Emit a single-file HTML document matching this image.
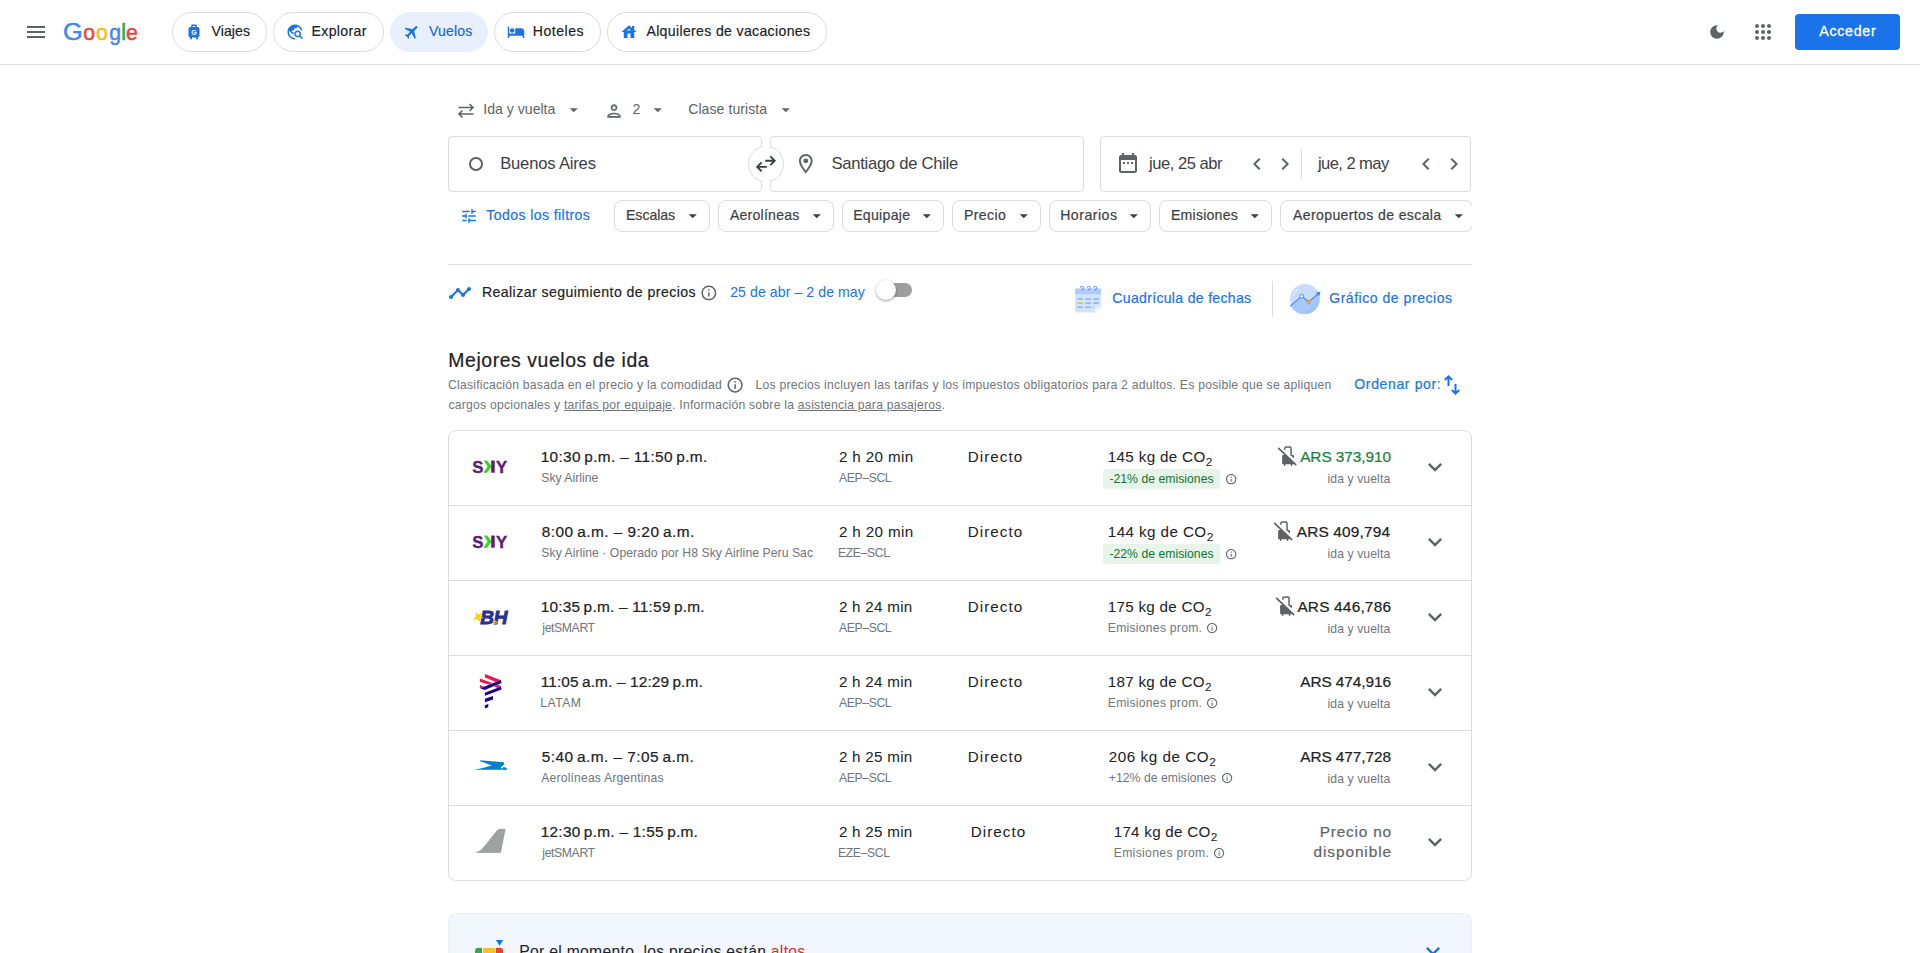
<!DOCTYPE html>
<html lang="es">
<head>
<meta charset="utf-8">
<title>Vuelos de Buenos Aires a Santiago de Chile</title>
<style>
*{box-sizing:border-box;margin:0;padding:0}
html,body{width:1920px;height:953px;overflow:hidden;background:#fff}
body{font-family:"Liberation Sans",sans-serif;color:#202124;position:relative}
.abs{position:absolute;white-space:nowrap}
svg{display:block}
u{text-decoration:underline;text-underline-offset:1px}
header{position:absolute;left:0;top:0;width:1920px;height:65px;border-bottom:1px solid #dadce0;background:#fff}
.pill{position:absolute;top:12px;height:40px;border:1px solid #dadce0;border-radius:20px}
.pill.on{background:#e8f0fe;border-color:#e8f0fe}
.btn{position:absolute;left:1795px;top:14px;width:105px;height:36px;border-radius:4px;background:#1a73e8}
.field{position:absolute;top:136px;height:56px;border:1px solid #dadce0;border-radius:4px;background:#fff}
.hr{position:absolute;left:448px;top:264px;width:1024px;height:1px;background:#dadce0}
.list{position:absolute;left:448px;top:430px;width:1024px;height:451px;border:1px solid #dadce0;border-radius:8px;background:#fff}
.row{position:absolute;left:0;width:1022px;height:75px;border-top:1px solid #dadce0}
.row:first-child{border-top-color:transparent}
</style>
</head>
<body>
<header>
<svg class="abs" style="left:24px;top:20px" width="24" height="24" viewBox="0 0 24 24"><path fill="#5f6368" d="M3 18h18v-2H3v2zm0-5h18v-2H3v2zm0-7v2h18V6H3z"/></svg>
<div class="logo"><span class="abs" style="left:63.00px;top:19px;font-size:23.6px;line-height:26px;color:#4285f4;-webkit-text-stroke:0.45px #4285f4;transform:scaleX(1.07);transform-origin:0 0;">G</span><span class="abs" style="left:83.20px;top:21px;font-size:21.2px;line-height:23px;color:#ea4335;-webkit-text-stroke:0.45px #ea4335;">o</span><span class="abs" style="left:96.00px;top:21px;font-size:21.2px;line-height:23px;color:#fbbc05;-webkit-text-stroke:0.45px #fbbc05;">o</span><span class="abs" style="left:109.20px;top:21px;font-size:21.2px;line-height:23px;color:#4285f4;-webkit-text-stroke:0.45px #4285f4;">g</span><span class="abs" style="left:120.90px;top:19px;font-size:23.6px;line-height:26px;color:#34a853;-webkit-text-stroke:0.45px #34a853;">l</span><span class="abs" style="left:126.10px;top:21px;font-size:21.2px;line-height:23px;color:#ea4335;-webkit-text-stroke:0.45px #ea4335;">e</span></div>
<nav>
<div class="pill" style="left:172px;width:95px"></div>
<span class="abs" style="left:211.50px;top:23px;font-size:14.1px;line-height:16px;color:#202124;letter-spacing:0.083px;-webkit-text-stroke:0.18px #202124;">Viajes</span>
<div class="pill" style="left:273px;width:111px"></div>
<span class="abs" style="left:311.50px;top:23px;font-size:14.1px;line-height:16px;color:#202124;letter-spacing:0.345px;-webkit-text-stroke:0.18px #202124;">Explorar</span>
<div class="pill on" style="left:390px;width:98px"></div>
<span class="abs" style="left:429.10px;top:23px;font-size:14.1px;line-height:16px;color:#1967d2;letter-spacing:0.115px;-webkit-text-stroke:0.18px #1967d2;">Vuelos</span>
<div class="pill" style="left:494px;width:107px"></div>
<span class="abs" style="left:532.80px;top:23px;font-size:14.1px;line-height:16px;color:#202124;letter-spacing:0.510px;-webkit-text-stroke:0.18px #202124;">Hoteles</span>
<div class="pill" style="left:607px;width:220px"></div>
<span class="abs" style="left:646.40px;top:23px;font-size:14.1px;line-height:16px;color:#202124;letter-spacing:0.337px;-webkit-text-stroke:0.18px #202124;">Alquileres de vacaciones</span>
<svg class="abs" style="left:188px;top:24px" width="12" height="16" viewBox="0 0 12 16"><path fill="#1a73e8" d="M3.900 0.600h4.200c.4 0 .7.300.7.700V3h.7c1.100 0 2 .9 2 2v6.500c0 1-.7 1.800-1.700 2v1.300c0 .4-.3.700-.7.700h-.4c-.4 0-.7-.3-.7-.700V13.500H4v1.300c0 .4-.3.700-.7.700h-.4c-.4 0-.7-.3-.7-.700V13.500c-1-.2-1.700-1-1.700-2V5c0-1.100.9-2 2-2h.7V1.300c0-.4.300-.7.700-.7zm.8 1.400V3h2.600V2z"/><text x="6" y="10.900" font-size="7" font-weight="bold" fill="#fff" text-anchor="middle" font-family="Liberation Sans">G</text></svg>
<svg class="abs" style="left:286px;top:22.500px" width="18" height="18" viewBox="0 0 24 24"><path fill="#1a73e8" d="M19.300 16.900c.4-.7.7-1.500.7-2.400 0-2.500-2-4.500-4.500-4.500S11 12 11 14.500s2 4.500 4.500 4.500c.9 0 1.700-.3 2.400-.7l3.200 3.200 1.400-1.400-3.200-3.200zm-3.800.1c-1.400 0-2.500-1.100-2.500-2.500s1.100-2.500 2.500-2.500 2.500 1.100 2.500 2.500-1.100 2.500-2.500 2.500zM12 20v2C6.480 22 2 17.520 2 12S6.480 2 12 2c4.840 0 8.870 3.440 9.800 8h-2.070c-.64-2.460-2.400-4.470-4.730-5.410V5c0 1.100-.9 2-2 2h-2v2c0 .55-.45 1-1 1H8v2h2v3H9l-4.790-4.790C4.080 10.790 4 11.380 4 12c0 4.410 3.590 8 8 8z"/></svg>
<svg class="abs" style="left:402.500px;top:22.500px;transform:rotate(45deg)" width="18" height="18" viewBox="0 0 24 24"><path fill="#1a73e8" d="M21 16v-2l-8-5V3.500c0-.83-.67-1.500-1.500-1.500S10 2.670 10 3.500V9l-8 5v2l8-2.500V19l-2 1.500V22l3.500-1 3.500 1v-1.500L13 19v-5.500l8 2.500z"/></svg>
<svg class="abs" style="left:506.700px;top:22.500px" width="18" height="18" viewBox="0 0 24 24"><path fill="#1a73e8" d="M7 13c1.660 0 3-1.340 3-3S8.660 7 7 7s-3 1.340-3 3 1.340 3 3 3zm12-6h-8v7H3V5H1v15h2v-3h18v3h2v-9c0-2.210-1.790-4-4-4z"/></svg>
<svg class="abs" style="left:619.500px;top:22.500px" width="18" height="18" viewBox="0 0 24 24"><path fill="#1a73e8" d="M19 9.300V4h-3v2.600L12 3 2 12h3v8h5v-6h4v6h5v-8h3l-3-2.700zm-9 .7c0-1.100.9-2 2-2s2 .9 2 2h-4z"/></svg>
</nav>
<svg class="abs" style="left:1708px;top:23px" width="18" height="18" viewBox="0 0 24 24"><path fill="#5f6368" d="M12 3c-4.970 0-9 4.030-9 9s4.030 9 9 9 9-4.030 9-9c0-.46-.04-.92-.1-1.360-.98 1.370-2.580 2.260-4.400 2.260-2.980 0-5.400-2.420-5.400-5.400 0-1.810.89-3.420 2.260-4.400-.44-.06-.9-.1-1.360-.1z"/></svg>
<svg class="abs" style="left:1751px;top:20px" width="24" height="24" viewBox="0 0 24 24" fill="#5f6368"><circle cx="6" cy="6" r="2"/><circle cx="12" cy="6" r="2"/><circle cx="18" cy="6" r="2"/><circle cx="6" cy="12" r="2"/><circle cx="12" cy="12" r="2"/><circle cx="18" cy="12" r="2"/><circle cx="6" cy="18" r="2"/><circle cx="12" cy="18" r="2"/><circle cx="18" cy="18" r="2"/></svg>
<div class="btn"></div>
<span class="abs" style="left:1819.30px;top:23px;font-size:14.2px;line-height:16px;color:#fff;letter-spacing:0.713px;-webkit-text-stroke:0.3px #fff;">Acceder</span>
</header>
<main>
<section class="opts">
<svg class="abs" style="left:454px;top:99px" width="24" height="24" viewBox="0 0 24 24" fill="none" stroke="#5f6368" stroke-width="1.6"><path d="M4.500 8.500h14.500M15.500 5l3.500 3.500-3.500 3.500M19.500 15H5M8.500 11.500L5 15l3.500 3.500"/></svg>
<span class="abs" style="left:483.30px;top:101px;font-size:14.1px;line-height:16px;color:#5f6368;">Ida y vuelta</span>
<svg class="abs" style="left:564.25px;top:99.55px" width="19.500" height="19.500" viewBox="0 0 24 24"><path fill="#5f6368" d="M7 10l5 5 5-5z"/></svg>
<svg class="abs" style="left:604.100px;top:100.600px" width="20" height="20" viewBox="0 0 24 24"><path fill="#5f6368" d="M12 6c1.100 0 2 .9 2 2s-.9 2-2 2-2-.9-2-2 .9-2 2-2m0 10c2.700 0 5.800 1.290 6 2H6c.23-.72 3.310-2 6-2m0-12C9.790 4 8 5.790 8 8s1.790 4 4 4 4-1.790 4-4-1.790-4-4-4zm0 10c-2.670 0-8 1.340-8 4v2h16v-2c0-2.660-5.330-4-8-4z"/></svg>
<span class="abs" style="left:632.50px;top:101px;font-size:14.1px;line-height:16px;color:#5f6368;">2</span>
<svg class="abs" style="left:648.25px;top:99.55px" width="19.500" height="19.500" viewBox="0 0 24 24"><path fill="#5f6368" d="M7 10l5 5 5-5z"/></svg>
<span class="abs" style="left:688.20px;top:101px;font-size:14.1px;line-height:16px;color:#5f6368;letter-spacing:0.051px;">Clase turista</span>
<svg class="abs" style="left:775.85px;top:99.55px" width="19.500" height="19.500" viewBox="0 0 24 24"><path fill="#5f6368" d="M7 10l5 5 5-5z"/></svg>
</section>
<section class="search">
<div class="field" style="left:448px;width:314px"></div>
<div class="field" style="left:770px;width:314px"></div>
<div class="field" style="left:1100px;width:371px"></div>
<div class="abs" style="left:469.200px;top:157.200px;width:13.700px;height:13.700px;border:2.400px solid #5f6368;border-radius:50%"></div>
<span class="abs" style="left:500.20px;top:154px;font-size:16.6px;line-height:19px;color:#3c4043;letter-spacing:-0.182px;">Buenos Aires</span>
<div class="abs" style="left:748.250px;top:146px;width:35.500px;height:35.500px;border:1px solid #dadce0;border-radius:50%;background:#fff"></div>
<div class="abs" style="left:762px;top:143px;width:8px;height:42px;background:#fff"></div>
<svg class="abs" style="left:754px;top:152px" width="24" height="24" viewBox="0 0 24 24" fill="none" stroke="#3c4043" stroke-width="1.900"><path d="M11.200 8.700H20.200M16.300 4.300l4.400 4.400-4.400 4.500M12.900 14.900H3.700M7.600 10.400l-4.400 4.500 4.400 4.500"/></svg>
<svg class="abs" style="left:794.300px;top:152.100px" width="23.600" height="23.600" viewBox="0 0 24 24"><path fill="#5f6368" d="M12 2C8.130 2 5 5.130 5 9c0 5.250 7 13 7 13s7-7.750 7-13c0-3.870-3.130-7-7-7zM7 9c0-2.760 2.240-5 5-5s5 2.240 5 5c0 2.880-2.880 7.190-5 9.880C9.920 16.210 7 11.850 7 9z"/><circle fill="#5f6368" cx="12" cy="9" r="2.500"/></svg>
<span class="abs" style="left:831.40px;top:154px;font-size:16.6px;line-height:19px;color:#3c4043;letter-spacing:-0.261px;">Santiago de Chile</span>
<svg class="abs" style="left:1116px;top:151px" width="24" height="24" viewBox="0 0 24 24"><path fill="#5f6368" d="M9 11H7v2h2v-2zm4 0h-2v2h2v-2zm4 0h-2v2h2v-2zm2-7h-1V2h-2v2H8V2H6v2H5c-1.110 0-1.990.9-1.990 2L3 20c0 1.100.89 2 2 2h14c1.100 0 2-.9 2-2V6c0-1.100-.9-2-2-2zm0 16H5V9h14v11z"/></svg>
<span class="abs" style="left:1149.10px;top:154px;font-size:16.6px;line-height:19px;color:#3c4043;letter-spacing:-0.489px;">jue, 25 abr</span>
<svg class="abs" style="left:1245.10px;top:152px" width="24" height="24" viewBox="0 0 24 24"><path fill="#5f6368" d="M15.410 7.410L14 6l-6 6 6 6 1.410-1.410L10.830 12z"/></svg>
<svg class="abs" style="left:1273.10px;top:152px" width="24" height="24" viewBox="0 0 24 24"><path fill="#5f6368" d="M10 6L8.590 7.410 13.170 12l-4.580 4.590L10 18l6-6z"/></svg>
<div class="abs" style="left:1301px;top:149px;width:1px;height:30px;background:#dadce0"></div>
<span class="abs" style="left:1318.00px;top:154px;font-size:16.6px;line-height:19px;color:#3c4043;letter-spacing:-0.595px;">jue, 2 may</span>
<svg class="abs" style="left:1414.30px;top:152px" width="24" height="24" viewBox="0 0 24 24"><path fill="#5f6368" d="M15.410 7.410L14 6l-6 6 6 6 1.410-1.410L10.830 12z"/></svg>
<svg class="abs" style="left:1442.30px;top:152px" width="24" height="24" viewBox="0 0 24 24"><path fill="#5f6368" d="M10 6L8.590 7.410 13.170 12l-4.580 4.590L10 18l6-6z"/></svg>
</section>
<section class="filters">
<svg class="abs" style="left:459.500px;top:207px" width="18" height="18" viewBox="0 0 24 24"><path fill="#1a73e8" d="M3 17v2h6v-2H3zM3 5v2h10V5H3zm10 16v-2h8v-2h-8v-2h-2v6h2zM7 9v2H3v2h4v2h2V9H7zm14 4v-2H11v2h10zm-6-4h2V7h4V5h-4V3h-2v6z"/></svg>
<span class="abs" style="left:486.30px;top:207px;font-size:14.1px;line-height:16px;color:#1a73e8;letter-spacing:0.401px;-webkit-text-stroke:0.2px #1a73e8;">Todos los filtros</span>
<div class="abs" style="left:448px;top:196px;width:1024px;height:40px;overflow:hidden">
<div class="abs" style="left:166px;top:4px;width:96px;height:32px;border:1px solid #dadce0;border-radius:8px"></div>
<div class="abs" style="left:270px;top:4px;width:116px;height:32px;border:1px solid #dadce0;border-radius:8px"></div>
<div class="abs" style="left:394px;top:4px;width:102px;height:32px;border:1px solid #dadce0;border-radius:8px"></div>
<div class="abs" style="left:504px;top:4px;width:89px;height:32px;border:1px solid #dadce0;border-radius:8px"></div>
<div class="abs" style="left:601px;top:4px;width:102px;height:32px;border:1px solid #dadce0;border-radius:8px"></div>
<div class="abs" style="left:711px;top:4px;width:113px;height:32px;border:1px solid #dadce0;border-radius:8px"></div>
<div class="abs" style="left:832px;top:4px;width:193px;height:32px;border:1px solid #dadce0;border-radius:8px"></div>
</div>
<span class="abs" style="left:626.00px;top:207px;font-size:14.1px;line-height:16px;color:#3c4043;letter-spacing:-0.034px;-webkit-text-stroke:0.18px #3c4043;">Escalas</span>
<svg class="abs" style="left:683.05px;top:206.35px" width="19.500" height="19.500" viewBox="0 0 24 24"><path fill="#3c4043" d="M7 10l5 5 5-5z"/></svg>
<span class="abs" style="left:729.90px;top:207px;font-size:14.1px;line-height:16px;color:#3c4043;letter-spacing:0.230px;-webkit-text-stroke:0.18px #3c4043;">Aerolíneas</span>
<svg class="abs" style="left:807.35px;top:206.35px" width="19.500" height="19.500" viewBox="0 0 24 24"><path fill="#3c4043" d="M7 10l5 5 5-5z"/></svg>
<span class="abs" style="left:853.20px;top:207px;font-size:14.1px;line-height:16px;color:#3c4043;letter-spacing:0.283px;-webkit-text-stroke:0.18px #3c4043;">Equipaje</span>
<svg class="abs" style="left:917.35px;top:206.35px" width="19.500" height="19.500" viewBox="0 0 24 24"><path fill="#3c4043" d="M7 10l5 5 5-5z"/></svg>
<span class="abs" style="left:964.00px;top:207px;font-size:14.1px;line-height:16px;color:#3c4043;letter-spacing:0.378px;-webkit-text-stroke:0.18px #3c4043;">Precio</span>
<svg class="abs" style="left:1014.15px;top:206.35px" width="19.500" height="19.500" viewBox="0 0 24 24"><path fill="#3c4043" d="M7 10l5 5 5-5z"/></svg>
<span class="abs" style="left:1060.20px;top:207px;font-size:14.1px;line-height:16px;color:#3c4043;letter-spacing:0.498px;-webkit-text-stroke:0.18px #3c4043;">Horarios</span>
<svg class="abs" style="left:1124.25px;top:206.35px" width="19.500" height="19.500" viewBox="0 0 24 24"><path fill="#3c4043" d="M7 10l5 5 5-5z"/></svg>
<span class="abs" style="left:1171.00px;top:207px;font-size:14.1px;line-height:16px;color:#3c4043;letter-spacing:0.217px;-webkit-text-stroke:0.18px #3c4043;">Emisiones</span>
<svg class="abs" style="left:1245.25px;top:206.35px" width="19.500" height="19.500" viewBox="0 0 24 24"><path fill="#3c4043" d="M7 10l5 5 5-5z"/></svg>
<span class="abs" style="left:1293.00px;top:207px;font-size:14.1px;line-height:16px;color:#3c4043;letter-spacing:0.356px;-webkit-text-stroke:0.18px #3c4043;">Aeropuertos de escala</span>
<svg class="abs" style="left:1449.45px;top:206.35px" width="19.500" height="19.500" viewBox="0 0 24 24"><path fill="#3c4043" d="M7 10l5 5 5-5z"/></svg>
</section>
<div class="hr"></div>
<section class="track">
<svg class="abs" style="left:447.900px;top:280.500px" width="24" height="24" viewBox="0 0 24 24"><path fill="#1a73e8" d="M23 8c0 1.100-.9 2-2 2-.18 0-.35-.02-.51-.07l-3.560 3.550c.05.16.07.34.07.52 0 1.100-.9 2-2 2s-2-.9-2-2c0-.18.02-.36.07-.52l-2.550-2.550c-.16.05-.34.07-.52.07s-.36-.02-.52-.07l-4.550 4.560c.05.16.07.33.07.51 0 1.100-.9 2-2 2s-2-.9-2-2 .9-2 2-2c.18 0 .35.02.51.07l4.560-4.550C8.020 9.360 8 9.180 8 9c0-1.100.9-2 2-2s2 .9 2 2c0 .18-.02.36-.07.52l2.550 2.550c.16-.05.34-.07.52-.07s.36.02.52.07l3.550-3.560C19.020 8.350 19 8.180 19 8c0-1.100.9-2 2-2s2 .9 2 2z"/></svg>
<span class="abs" style="left:481.90px;top:284px;font-size:14.1px;line-height:16px;color:#202124;letter-spacing:0.437px;-webkit-text-stroke:0.18px #202124;">Realizar seguimiento de precios</span>
<svg class="abs" style="left:700.02px;top:284.32px" width="17.76" height="17.76" viewBox="0 0 24 24"><path fill="#5f6368" d="M11 17h2v-6h-2v6zm1-15C6.480 2 2 6.480 2 12s4.480 10 10 10 10-4.480 10-10S17.520 2 12 2zm0 18c-4.410 0-8-3.590-8-8s3.590-8 8-8 8 3.590 8 8-3.590 8-8 8zM11 9h2V7h-2v2z"/></svg>
<span class="abs" style="left:730.20px;top:284px;font-size:14.1px;line-height:16px;color:#1a73e8;letter-spacing:0.076px;">25 de abr – 2 de may</span>
<div class="abs" style="left:878px;top:283px;width:34px;height:14px;border-radius:7px;background:#9e9e9e"></div>
<div class="abs" style="left:876px;top:280px;width:20px;height:20px;border-radius:50%;background:#fff;box-shadow:0 1px 3px rgba(0,0,0,.4)"></div>
<svg class="abs" style="left:1075px;top:285.500px" width="26" height="27" viewBox="0 0 26 27"><path fill="#d2e3fc" d="M1.500 2.500h23A1.500 1.500 0 0 1 26 4v16.500l-6 6H1.500A1.500 1.500 0 0 1 0 25V4a1.500 1.500 0 0 1 1.500-1.500z"/><path fill="#aecbfa" d="M1.500 2.500h23A1.500 1.500 0 0 1 26 4v4.200H0V4a1.500 1.500 0 0 1 1.500-1.500z"/><path fill="#e8f0fe" d="M20 26.500v-4.500a1.500 1.500 0 0 1 1.500-1.500H26z"/><g fill="none" stroke="#4285f4" stroke-width=".9"><path d="M5.400 1.800a1.600 1.600 0 1 1 1.700 1.600v1.100M12 1.800a1.600 1.600 0 1 1 1.700 1.600v1.100M18.600 1.800a1.600 1.600 0 1 1 1.700 1.600v1.100"/></g><g stroke="#8ab4f8" stroke-width="1.500"><path d="M2.200 13h5.700M10.400 13H16M18.400 13H24M10.400 17.200H16M18.400 17.200H24M2.200 21.200h5.700M10.400 21.200H16M18.400 21.200h.8"/></g><path stroke="#fbbc04" stroke-width="1.500" d="M2.200 17.200h5.700"/></svg>
<span class="abs" style="left:1112.30px;top:290px;font-size:14.1px;line-height:16px;color:#1a73e8;letter-spacing:0.298px;-webkit-text-stroke:0.18px #1a73e8;">Cuadrícula de fechas</span>
<div class="abs" style="left:1272px;top:281px;width:1px;height:36px;background:#dadce0"></div>
<svg class="abs" style="left:1289.900px;top:284.200px" width="31" height="30" viewBox="0 0 31 30"><circle cx="15" cy="15" r="15" fill="#c9dcfc"/><path fill="#a8c7fa" d="M.8 21.500L11.700 12.200l7 5.700 9.600-8.400A15 15 0 0 1 .8 21.500z"/><path d="M16 27.500a12.500 12.500 0 0 0 11-9.500" fill="none" stroke="#8ab4f8" stroke-width=".9"/><path d="M3.200 12a12.500 12.500 0 0 1 5-7" fill="none" stroke="#e8f0fe" stroke-width=".9"/><path d="M0 22.200L11.700 12.200l7 5.700L29 9" fill="none" stroke="#4285f4" stroke-width="1.100"/><path fill="#4285f4" d="M30.500 7.600l-1.300 4.600-3.300-3.500z"/><circle cx="11.700" cy="12.200" r="1.900" fill="#e8f0fe" stroke="#4285f4" stroke-width=".9"/><circle cx="18.700" cy="17.900" r="1.700" fill="#fbbc04" stroke="#e8710a" stroke-width=".7"/></svg>
<span class="abs" style="left:1329.20px;top:290px;font-size:14.1px;line-height:16px;color:#1a73e8;letter-spacing:0.499px;-webkit-text-stroke:0.18px #1a73e8;">Gráfico de precios</span>
</section>
<section class="head">
<span class="abs" style="left:448.30px;top:349px;font-size:19.4px;line-height:22px;color:#202124;letter-spacing:0.583px;-webkit-text-stroke:0.2px #202124;font-weight:normal;">Mejores vuelos de ida</span>
<span class="abs" style="left:448.00px;top:378px;font-size:12.2px;line-height:14px;color:#70757a;letter-spacing:0.218px;">Clasificación basada en el precio y la comodidad</span>
<svg class="abs" style="left:725.68px;top:376.08px" width="18.24" height="18.24" viewBox="0 0 24 24"><path fill="#5f6368" d="M11 17h2v-6h-2v6zm1-15C6.480 2 2 6.480 2 12s4.480 10 10 10 10-4.480 10-10S17.520 2 12 2zm0 18c-4.410 0-8-3.590-8-8s3.590-8 8-8 8 3.590 8 8-3.590 8-8 8zM11 9h2V7h-2v2z"/></svg>
<span class="abs" style="left:755.60px;top:378px;font-size:12.2px;line-height:14px;color:#70757a;letter-spacing:0.228px;">Los precios incluyen las tarifas y los impuestos obligatorios para 2 adultos. Es posible que se apliquen</span>
<span class="abs" style="left:448.40px;top:398px;font-size:12.2px;line-height:14px;color:#70757a;letter-spacing:0.223px;">cargos opcionales y <u>tarifas por equipaje</u>. Información sobre la <u>asistencia para pasajeros</u>.</span>
<span class="abs" style="left:1354.30px;top:376px;font-size:14.1px;line-height:16px;color:#1a73e8;letter-spacing:0.592px;-webkit-text-stroke:0.18px #1a73e8;">Ordenar por:</span>
<svg class="abs" style="left:1440px;top:373px" width="24" height="24" viewBox="0 0 24 24" fill="none" stroke="#1a73e8" stroke-width="2"><path d="M8.500 13V3.500M4.800 7L8.500 3.300 12.200 7M15.500 11v9.500M11.800 17l3.700 3.700 3.700-3.700"/></svg>
</section>
<section class="flights">
<div class="list">
<div class="row" style="top:-1px"></div>
<div class="row" style="top:74px"></div>
<div class="row" style="top:149px"></div>
<div class="row" style="top:224px"></div>
<div class="row" style="top:299px"></div>
<div class="row" style="top:374px"></div>
</div>
<article>
<svg class="abs" style="left:472px;top:458px" width="37" height="18" viewBox="0 0 37 18" font-family="Liberation Sans" font-weight="bold" font-size="16.800"><text x="0.300" y="14.700" fill="#5e1a78" stroke="#5e1a78" stroke-width=".35">S</text><polygon fill="#2edc0a" points="11.800,2.500 15.200,2.500 19.600,8.500 14.900,14.700 11.300,14.700 15.600,8.500"/><rect x="19.200" y="2.500" width="3.500" height="12.200" fill="#5e1a78"/><text x="24" y="14.700" fill="#5e1a78" stroke="#5e1a78" stroke-width=".35">Y</text></svg>
<span class="abs" style="left:540.70px;top:448px;font-size:15.4px;line-height:17px;color:#202124;letter-spacing:0.343px;-webkit-text-stroke:0.2px #202124;">10:30 p.m. – 11:50 p.m.</span>
<span class="abs" style="left:541.30px;top:471px;font-size:12.2px;line-height:14px;color:#70757a;letter-spacing:0.011px;">Sky Airline</span>
<span class="abs" style="left:838.90px;top:448px;font-size:15.2px;line-height:17px;color:#202124;letter-spacing:0.370px;">2 h 20 min</span>
<span class="abs" style="left:839.00px;top:471px;font-size:12.2px;line-height:14px;color:#70757a;letter-spacing:-0.383px;">AEP–SCL</span>
<span class="abs" style="left:967.80px;top:448px;font-size:15.2px;line-height:17px;color:#202124;letter-spacing:1.057px;">Directo</span>
<span class="abs" style="left:1107.80px;top:448px;font-size:15.2px;line-height:17px;color:#202124;letter-spacing:0.336px;">145 kg de CO<sub style="font-size:11.800px;line-height:0;vertical-align:baseline;position:relative;top:4px;margin-left:.2px;letter-spacing:0">2</sub></span>
<div class="abs" style="left:1103px;top:469px;width:117px;height:20px;border-radius:3px;background:#e6f4ea"></div>
<span class="abs" style="left:1109.40px;top:472px;font-size:12.2px;line-height:14px;color:#137333;letter-spacing:0.034px;">-21% de emisiones</span>
<svg class="abs" style="left:1224.92px;top:472.92px" width="12.36" height="12.36" viewBox="0 0 24 24"><path fill="#5f6368" d="M11 17h2v-6h-2v6zm1-15C6.480 2 2 6.480 2 12s4.480 10 10 10 10-4.480 10-10S17.520 2 12 2zm0 18c-4.410 0-8-3.590-8-8s3.590-8 8-8 8 3.590 8 8-3.590 8-8 8zM11 9h2V7h-2v2z"/></svg>
<svg class="abs" style="left:1276.94px;top:445.00px" width="21" height="22" viewBox="0 0 21 22"><path fill="none" stroke="#5f6368" stroke-width="1.500" d="M7.850 4.700V3.200a1.250 1.250 0 0 1 1.250-1.250h3.700a1.250 1.250 0 0 1 1.250 1.250V10.500"/><path fill="#5f6368" d="M5.900 9.900h2.620L17 18.060v.34a.8.8 0 0 1-.8.800H5.900a.8.8 0 0 1-.8-.800v-7.700a.8.800 0 0 1 .8-.800z"/><path fill="#5f6368" d="M13.280 9.900H16.200a.8.800 0 0 1 .8.800v2.780z"/><path fill="#5f6368" d="M6.700 19h1.900l-.35 1.500a.6.600 0 0 1-1.200 0zM13.600 19h1.900l-.35 1.500a.6.600 0 0 1-1.200 0z"/><path fill="none" stroke="#5f6368" stroke-width="1.700" stroke-linecap="round" d="M1.700 3.300l17 16.400"/></svg>
<span class="abs" style="left:1300.20px;top:448px;font-size:15.4px;line-height:17px;color:#188038;letter-spacing:-0.080px;-webkit-text-stroke:0.2px #188038;">ARS 373,910</span>
<span class="abs" style="left:1327.50px;top:472px;font-size:12.2px;line-height:14px;color:#70757a;letter-spacing:0.093px;">ida y vuelta</span>
<svg class="abs" style="left:1421.00px;top:452.88px" width="28" height="28" viewBox="0 0 24 24"><path fill="#5f6368" d="M16.590 8.590L12 13.170 7.410 8.590 6 10l6 6 6-6z"/></svg>
</article>
<article>
<svg class="abs" style="left:472px;top:533px" width="37" height="18" viewBox="0 0 37 18" font-family="Liberation Sans" font-weight="bold" font-size="16.800"><text x="0.300" y="14.700" fill="#5e1a78" stroke="#5e1a78" stroke-width=".35">S</text><polygon fill="#2edc0a" points="11.800,2.500 15.200,2.500 19.600,8.500 14.900,14.700 11.300,14.700 15.600,8.500"/><rect x="19.200" y="2.500" width="3.500" height="12.200" fill="#5e1a78"/><text x="24" y="14.700" fill="#5e1a78" stroke="#5e1a78" stroke-width=".35">Y</text></svg>
<span class="abs" style="left:541.70px;top:523px;font-size:15.4px;line-height:17px;color:#202124;letter-spacing:0.481px;-webkit-text-stroke:0.2px #202124;">8:00 a.m. – 9:20 a.m.</span>
<span class="abs" style="left:541.30px;top:546px;font-size:12.2px;line-height:14px;color:#70757a;letter-spacing:0.059px;">Sky Airline · Operado por H8 Sky Airline Peru Sac</span>
<span class="abs" style="left:838.90px;top:523px;font-size:15.2px;line-height:17px;color:#202124;letter-spacing:0.370px;">2 h 20 min</span>
<span class="abs" style="left:838.00px;top:546px;font-size:12.2px;line-height:14px;color:#70757a;letter-spacing:-0.352px;">EZE–SCL</span>
<span class="abs" style="left:967.80px;top:523px;font-size:15.2px;line-height:17px;color:#202124;letter-spacing:1.057px;">Directo</span>
<span class="abs" style="left:1107.80px;top:523px;font-size:15.2px;line-height:17px;color:#202124;letter-spacing:0.418px;">144 kg de CO<sub style="font-size:11.800px;line-height:0;vertical-align:baseline;position:relative;top:4px;margin-left:.2px;letter-spacing:0">2</sub></span>
<div class="abs" style="left:1103px;top:544px;width:117px;height:20px;border-radius:3px;background:#e6f4ea"></div>
<span class="abs" style="left:1109.40px;top:547px;font-size:12.2px;line-height:14px;color:#137333;letter-spacing:0.034px;">-22% de emisiones</span>
<svg class="abs" style="left:1224.92px;top:547.92px" width="12.36" height="12.36" viewBox="0 0 24 24"><path fill="#5f6368" d="M11 17h2v-6h-2v6zm1-15C6.480 2 2 6.480 2 12s4.480 10 10 10 10-4.480 10-10S17.520 2 12 2zm0 18c-4.410 0-8-3.590-8-8s3.590-8 8-8 8 3.590 8 8-3.590 8-8 8zM11 9h2V7h-2v2z"/></svg>
<svg class="abs" style="left:1273.34px;top:520.00px" width="21" height="22" viewBox="0 0 21 22"><path fill="none" stroke="#5f6368" stroke-width="1.500" d="M7.850 4.700V3.200a1.250 1.250 0 0 1 1.250-1.250h3.700a1.250 1.250 0 0 1 1.250 1.250V10.500"/><path fill="#5f6368" d="M5.900 9.900h2.620L17 18.060v.34a.8.8 0 0 1-.8.800H5.900a.8.8 0 0 1-.8-.800v-7.700a.8.800 0 0 1 .8-.800z"/><path fill="#5f6368" d="M13.280 9.900H16.200a.8.800 0 0 1 .8.800v2.780z"/><path fill="#5f6368" d="M6.700 19h1.900l-.35 1.500a.6.600 0 0 1-1.200 0zM13.600 19h1.900l-.35 1.500a.6.600 0 0 1-1.200 0z"/><path fill="none" stroke="#5f6368" stroke-width="1.700" stroke-linecap="round" d="M1.700 3.300l17 16.400"/></svg>
<span class="abs" style="left:1296.80px;top:523px;font-size:15.4px;line-height:17px;color:#202124;letter-spacing:0.160px;-webkit-text-stroke:0.2px #202124;">ARS 409,794</span>
<span class="abs" style="left:1327.50px;top:547px;font-size:12.2px;line-height:14px;color:#70757a;letter-spacing:0.093px;">ida y vuelta</span>
<svg class="abs" style="left:1421.00px;top:527.88px" width="28" height="28" viewBox="0 0 24 24"><path fill="#5f6368" d="M16.590 8.590L12 13.170 7.410 8.590 6 10l6 6 6-6z"/></svg>
</article>
<article>
<svg class="abs" style="left:471px;top:606px" width="40" height="22" viewBox="0 0 40 22" font-family="Liberation Sans"><text x="9.300" y="17.900" font-size="19" font-weight="bold" font-style="italic" fill="#2b2f8e" stroke="#2b2f8e" stroke-width=".9" letter-spacing="-.3">BH</text><polygon fill="#f2d410" points="4.400,6.100 7.380,8.800 10.500,6.300 9.470,10.190 12.800,11.800 9.170,12.710 8.800,15.800 6.320,13.390 2.100,13.500 5.020,10.460"/><circle cx="24.200" cy="16.300" r="1.700" fill="#f2d410"/><circle cx="23.300" cy="13.800" r=".8" fill="#f2d410"/><circle cx="24.600" cy="16.600" r=".6" fill="#2b2f8e"/></svg>
<span class="abs" style="left:540.70px;top:598px;font-size:15.4px;line-height:17px;color:#202124;letter-spacing:0.221px;-webkit-text-stroke:0.2px #202124;">10:35 p.m. – 11:59 p.m.</span>
<span class="abs" style="left:542.30px;top:621px;font-size:12.2px;line-height:14px;color:#70757a;letter-spacing:-0.366px;">jetSMART</span>
<span class="abs" style="left:838.90px;top:598px;font-size:15.2px;line-height:17px;color:#202124;letter-spacing:0.270px;">2 h 24 min</span>
<span class="abs" style="left:839.00px;top:621px;font-size:12.2px;line-height:14px;color:#70757a;letter-spacing:-0.383px;">AEP–SCL</span>
<span class="abs" style="left:967.80px;top:598px;font-size:15.2px;line-height:17px;color:#202124;letter-spacing:1.057px;">Directo</span>
<span class="abs" style="left:1107.80px;top:598px;font-size:15.2px;line-height:17px;color:#202124;letter-spacing:0.282px;">175 kg de CO<sub style="font-size:11.800px;line-height:0;vertical-align:baseline;position:relative;top:4px;margin-left:.2px;letter-spacing:0">2</sub></span>
<span class="abs" style="left:1107.80px;top:621px;font-size:12.2px;line-height:14px;color:#70757a;letter-spacing:0.245px;">Emisiones prom.</span>
<svg class="abs" style="left:1206.08px;top:621.98px" width="12.24" height="12.24" viewBox="0 0 24 24"><path fill="#5f6368" d="M11 17h2v-6h-2v6zm1-15C6.480 2 2 6.480 2 12s4.480 10 10 10 10-4.480 10-10S17.520 2 12 2zm0 18c-4.410 0-8-3.590-8-8s3.590-8 8-8 8 3.590 8 8-3.590 8-8 8zM11 9h2V7h-2v2z"/></svg>
<svg class="abs" style="left:1274.54px;top:595.00px" width="21" height="22" viewBox="0 0 21 22"><path fill="none" stroke="#5f6368" stroke-width="1.500" d="M7.850 4.700V3.200a1.250 1.250 0 0 1 1.250-1.250h3.700a1.250 1.250 0 0 1 1.250 1.250V10.500"/><path fill="#5f6368" d="M5.900 9.900h2.620L17 18.060v.34a.8.8 0 0 1-.8.800H5.900a.8.8 0 0 1-.8-.800v-7.700a.8.800 0 0 1 .8-.800z"/><path fill="#5f6368" d="M13.280 9.900H16.200a.8.800 0 0 1 .8.800v2.780z"/><path fill="#5f6368" d="M6.700 19h1.900l-.35 1.500a.6.600 0 0 1-1.200 0zM13.600 19h1.900l-.35 1.500a.6.600 0 0 1-1.200 0z"/><path fill="none" stroke="#5f6368" stroke-width="1.700" stroke-linecap="round" d="M1.700 3.300l17 16.400"/></svg>
<span class="abs" style="left:1297.40px;top:598px;font-size:15.4px;line-height:17px;color:#202124;letter-spacing:0.200px;-webkit-text-stroke:0.2px #202124;">ARS 446,786</span>
<span class="abs" style="left:1327.50px;top:622px;font-size:12.2px;line-height:14px;color:#70757a;letter-spacing:0.093px;">ida y vuelta</span>
<svg class="abs" style="left:1421.00px;top:602.88px" width="28" height="28" viewBox="0 0 24 24"><path fill="#5f6368" d="M16.590 8.590L12 13.170 7.410 8.590 6 10l6 6 6-6z"/></svg>
</article>
<article>
<svg class="abs" style="left:464px;top:668px" width="60" height="48" viewBox="0 0 60 48"><polygon fill="#ed1650" points="20.900,6.050 37,12.200 32.500,14.300 20.900,9.600"/><polygon fill="#ed1650" points="15.900,10.600 28.200,15.100 25,16.600 15.900,14.100"/><polygon fill="#ed1650" points="15.900,17.100 20.200,18.600 15.900,20.200"/><polygon fill="#ed1650" points="30.200,18.200 34.200,16.700 37.300,18.200 33.200,19.900"/><polygon fill="#1b0088" points="16.100,20.200 37,12.100 37.500,15.100 20.700,21.900"/><polygon fill="#1b0088" points="20.900,24.700 37,18.400 37.500,21.400 20.900,27.700"/><polygon fill="#1b0088" points="20.900,30.700 29,28 29,31.500 20.900,34.300"/><polygon fill="#1b0088" points="20.900,37.300 24.400,36 24.200,39.300 20.900,40.600"/></svg>
<span class="abs" style="left:540.70px;top:673px;font-size:15.4px;line-height:17px;color:#202124;letter-spacing:0.139px;-webkit-text-stroke:0.2px #202124;">11:05 a.m. – 12:29 p.m.</span>
<span class="abs" style="left:540.30px;top:696px;font-size:12.2px;line-height:14px;color:#70757a;letter-spacing:0.433px;">LATAM</span>
<span class="abs" style="left:838.90px;top:673px;font-size:15.2px;line-height:17px;color:#202124;letter-spacing:0.270px;">2 h 24 min</span>
<span class="abs" style="left:839.00px;top:696px;font-size:12.2px;line-height:14px;color:#70757a;letter-spacing:-0.383px;">AEP–SCL</span>
<span class="abs" style="left:967.80px;top:673px;font-size:15.2px;line-height:17px;color:#202124;letter-spacing:1.057px;">Directo</span>
<span class="abs" style="left:1107.80px;top:673px;font-size:15.2px;line-height:17px;color:#202124;letter-spacing:0.282px;">187 kg de CO<sub style="font-size:11.800px;line-height:0;vertical-align:baseline;position:relative;top:4px;margin-left:.2px;letter-spacing:0">2</sub></span>
<span class="abs" style="left:1107.80px;top:696px;font-size:12.2px;line-height:14px;color:#70757a;letter-spacing:0.245px;">Emisiones prom.</span>
<svg class="abs" style="left:1206.08px;top:696.98px" width="12.24" height="12.24" viewBox="0 0 24 24"><path fill="#5f6368" d="M11 17h2v-6h-2v6zm1-15C6.480 2 2 6.480 2 12s4.480 10 10 10 10-4.480 10-10S17.520 2 12 2zm0 18c-4.410 0-8-3.590-8-8s3.590-8 8-8 8 3.590 8 8-3.590 8-8 8zM11 9h2V7h-2v2z"/></svg>
<span class="abs" style="left:1300.30px;top:673px;font-size:15.4px;line-height:17px;color:#202124;letter-spacing:-0.090px;-webkit-text-stroke:0.2px #202124;">ARS 474,916</span>
<span class="abs" style="left:1327.50px;top:697px;font-size:12.2px;line-height:14px;color:#70757a;letter-spacing:0.093px;">ida y vuelta</span>
<svg class="abs" style="left:1421.00px;top:677.88px" width="28" height="28" viewBox="0 0 24 24"><path fill="#5f6368" d="M16.590 8.590L12 13.170 7.410 8.590 6 10l6 6 6-6z"/></svg>
</article>
<article>
<svg class="abs" style="left:464px;top:748px" width="60" height="32" viewBox="0 0 60 32"><path fill="#0080c9" d="M16.100 12.300C24 13.200 32 13.700 38.300 14.100c1.700.2 2.300 1.400 1.600 2.400-.7 1.100-1.700 1.900-3.100 2.500l.9 1.900c.6-1.200 1.800-1.800 3.100-1.700 1.300.3 2.300 1.300 2.900 2.600H10.400c6.600-1.500 12.600-2.600 17.500-4.200C24 16 20 14.500 16.100 13.200z"/></svg>
<span class="abs" style="left:541.70px;top:748px;font-size:15.4px;line-height:17px;color:#202124;letter-spacing:0.451px;-webkit-text-stroke:0.2px #202124;">5:40 a.m. – 7:05 a.m.</span>
<span class="abs" style="left:541.30px;top:771px;font-size:12.2px;line-height:14px;color:#70757a;letter-spacing:0.149px;">Aerolíneas Argentinas</span>
<span class="abs" style="left:838.90px;top:748px;font-size:15.2px;line-height:17px;color:#202124;letter-spacing:0.270px;">2 h 25 min</span>
<span class="abs" style="left:839.00px;top:771px;font-size:12.2px;line-height:14px;color:#70757a;letter-spacing:-0.383px;">AEP–SCL</span>
<span class="abs" style="left:967.80px;top:748px;font-size:15.2px;line-height:17px;color:#202124;letter-spacing:1.057px;">Directo</span>
<span class="abs" style="left:1108.80px;top:748px;font-size:15.2px;line-height:17px;color:#202124;letter-spacing:0.555px;">206 kg de CO<sub style="font-size:11.800px;line-height:0;vertical-align:baseline;position:relative;top:4px;margin-left:.2px;letter-spacing:0">2</sub></span>
<span class="abs" style="left:1108.80px;top:771px;font-size:12.2px;line-height:14px;color:#70757a;letter-spacing:0.043px;">+12% de emisiones</span>
<svg class="abs" style="left:1220.58px;top:771.98px" width="12.24" height="12.24" viewBox="0 0 24 24"><path fill="#5f6368" d="M11 17h2v-6h-2v6zm1-15C6.480 2 2 6.480 2 12s4.480 10 10 10 10-4.480 10-10S17.520 2 12 2zm0 18c-4.410 0-8-3.590-8-8s3.590-8 8-8 8 3.590 8 8-3.590 8-8 8zM11 9h2V7h-2v2z"/></svg>
<span class="abs" style="left:1300.30px;top:748px;font-size:15.4px;line-height:17px;color:#202124;letter-spacing:-0.090px;-webkit-text-stroke:0.2px #202124;">ARS 477,728</span>
<span class="abs" style="left:1327.50px;top:772px;font-size:12.2px;line-height:14px;color:#70757a;letter-spacing:0.093px;">ida y vuelta</span>
<svg class="abs" style="left:1421.00px;top:752.88px" width="28" height="28" viewBox="0 0 24 24"><path fill="#5f6368" d="M16.590 8.590L12 13.170 7.410 8.590 6 10l6 6 6-6z"/></svg>
</article>
<article>
<svg class="abs" style="left:464px;top:820px" width="60" height="40" viewBox="0 0 60 40"><path fill="#9fa1a1" stroke="#808384" stroke-width=".5" d="M12.600 32.500C15 31.500 16.800 30.500 18.200 29.200L31.900 12.200C33.200 10.500 34.300 9.300 35.800 9.300H41.200L36.500 32.500z"/></svg>
<span class="abs" style="left:540.70px;top:823px;font-size:15.4px;line-height:17px;color:#202124;letter-spacing:0.265px;-webkit-text-stroke:0.2px #202124;">12:30 p.m. – 1:55 p.m.</span>
<span class="abs" style="left:542.30px;top:846px;font-size:12.2px;line-height:14px;color:#70757a;letter-spacing:-0.366px;">jetSMART</span>
<span class="abs" style="left:838.90px;top:823px;font-size:15.2px;line-height:17px;color:#202124;letter-spacing:0.270px;">2 h 25 min</span>
<span class="abs" style="left:838.00px;top:846px;font-size:12.2px;line-height:14px;color:#70757a;letter-spacing:-0.352px;">EZE–SCL</span>
<span class="abs" style="left:970.80px;top:823px;font-size:15.2px;line-height:17px;color:#202124;letter-spacing:1.057px;">Directo</span>
<span class="abs" style="left:1113.70px;top:823px;font-size:15.2px;line-height:17px;color:#202124;letter-spacing:0.264px;">174 kg de CO<sub style="font-size:11.800px;line-height:0;vertical-align:baseline;position:relative;top:4px;margin-left:.2px;letter-spacing:0">2</sub></span>
<span class="abs" style="left:1113.70px;top:846px;font-size:12.2px;line-height:14px;color:#70757a;letter-spacing:0.323px;">Emisiones prom.</span>
<svg class="abs" style="left:1213.08px;top:846.98px" width="12.24" height="12.24" viewBox="0 0 24 24"><path fill="#5f6368" d="M11 17h2v-6h-2v6zm1-15C6.480 2 2 6.480 2 12s4.480 10 10 10 10-4.480 10-10S17.520 2 12 2zm0 18c-4.410 0-8-3.590-8-8s3.590-8 8-8 8 3.590 8 8-3.590 8-8 8zM11 9h2V7h-2v2z"/></svg>
<span class="abs" style="left:1319.80px;top:823px;font-size:15.4px;line-height:17px;color:#5f6368;letter-spacing:0.780px;-webkit-text-stroke:0.2px #5f6368;">Precio no</span>
<span class="abs" style="left:1313.50px;top:843px;font-size:15.4px;line-height:17px;color:#5f6368;letter-spacing:0.917px;-webkit-text-stroke:0.2px #5f6368;">disponible</span>
<svg class="abs" style="left:1421.00px;top:827.88px" width="28" height="28" viewBox="0 0 24 24"><path fill="#5f6368" d="M16.590 8.590L12 13.170 7.410 8.590 6 10l6 6 6-6z"/></svg>
</article>
</section>
<section class="insight">
<div class="abs" style="left:448px;top:913px;width:1024px;height:60px;border-radius:8px;background:#f2f6fe;border:1px solid #e8f0fe"></div>
<svg class="abs" style="left:474px;top:939px" width="31" height="16" viewBox="-1 -1 31 16"><g stroke="#fff" stroke-width="1.600" stroke-linejoin="round" paint-order="stroke"><polygon fill="#1a73e8" points="21,0.100 28.100,0.100 24.550,5.900"/><path fill="#34a853" d="M0 11a3.200 3.200 0 0 1 3.200-3.200H7.100V16H0z"/><rect x="8.100" y="7.800" width="11.900" height="8.200" fill="#fbc02d"/><path fill="#ea4335" d="M21 7.800h3.900a3.200 3.200 0 0 1 3.200 3.200v5H21z"/></g></svg>
<span class="abs" style="left:519.30px;top:943px;font-size:15.7px;line-height:17px;color:#202124;letter-spacing:0.294px;">Por el momento, los precios están <span style="color:#d93025">altos</span></span>
<svg class="abs" style="left:1419.00px;top:937.18px" width="28" height="28" viewBox="0 0 24 24"><path fill="#1a73e8" d="M16.590 8.590L12 13.170 7.410 8.590 6 10l6 6 6-6z"/></svg>
</section>
</main>
</body>
</html>
